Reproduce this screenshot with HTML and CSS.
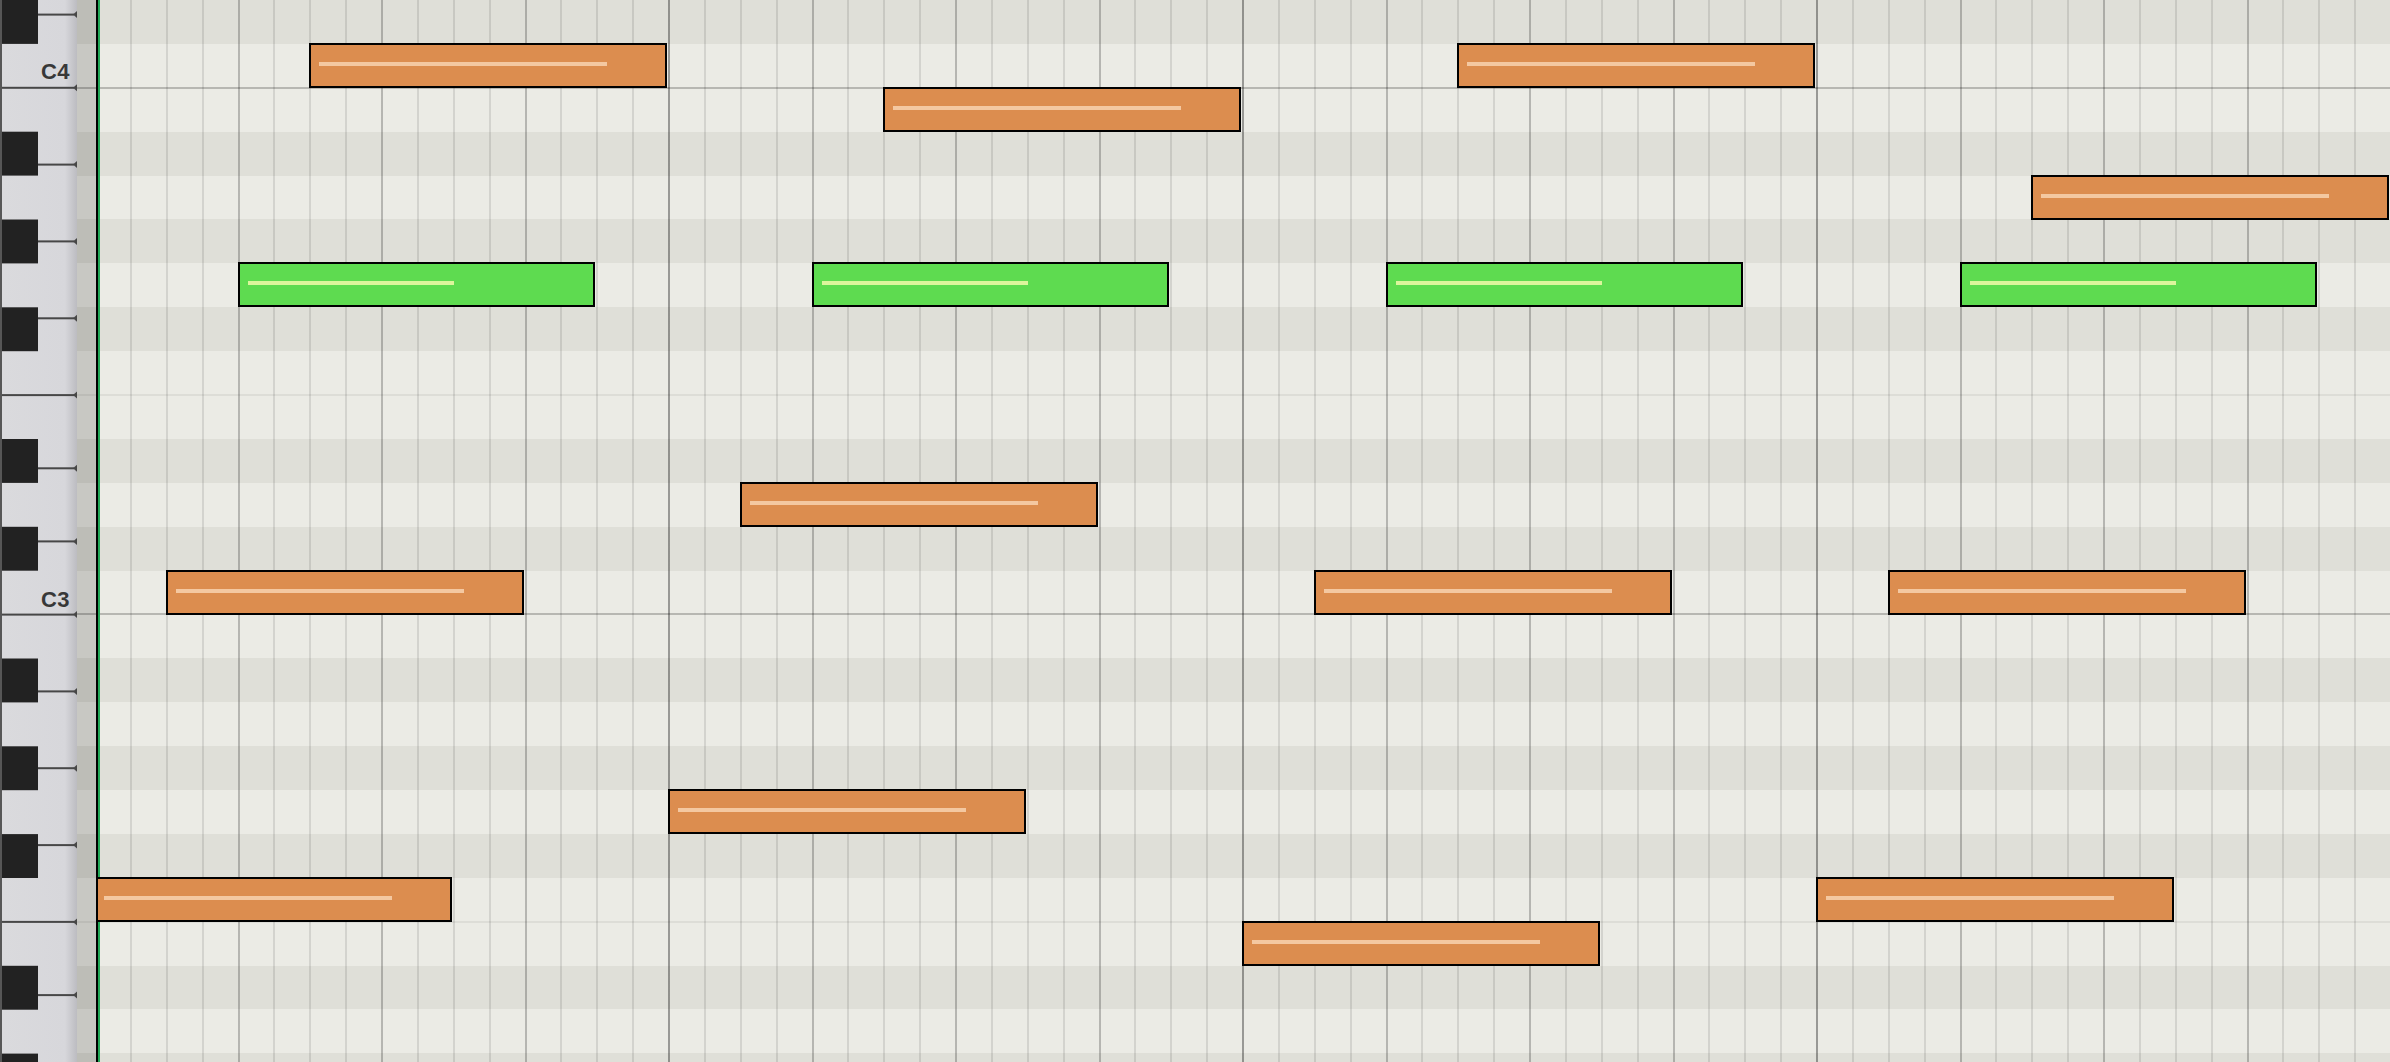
FILE: index.html
```html
<!DOCTYPE html>
<html lang="en">
<head>
    <meta charset="UTF-8">
    <meta name="viewport" content="width=device-width, initial-scale=1.0">
    <title>Piano Roll</title>

    <link rel="stylesheet" href="styles.css">

</head>
<body>

<div class="editor">

    <!-- keyboard: 12 rows per octave, white keys split C-E / F-B -->
    <div class="keys">
        <svg width="77" height="1062" viewBox="0 0 77 1062">
            <defs>
                <linearGradient id="whiteKey" x1="0" x2="1" y1="0" y2="0">
                    <stop offset="0" stop-color="#dadadd"/>
                    <stop offset="0.84" stop-color="#d7d7db"/>
                    <stop offset="1" stop-color="#bcbcc1"/>
                </linearGradient>
            </defs>
            <rect x="0" y="0" width="2" height="1062" fill="#575757"/>
            <rect x="2" y="0" width="75" height="1062" fill="url(#whiteKey)"/>

            <g fill="#474747">
                <rect x="2" y="13.6" width="72" height="2"/><polygon points="73,14.6 77,11.1 77,18.1"/>
                <rect x="2" y="86.8" width="72" height="2"/><polygon points="73,87.8 77,84.3 77,91.3"/>
                <rect x="2" y="163.6" width="72" height="2"/><polygon points="73,164.6 77,161.1 77,168.1"/>
                <rect x="2" y="240.4" width="72" height="2"/><polygon points="73,241.4 77,237.9 77,244.9"/>
                <rect x="2" y="317.3" width="72" height="2"/><polygon points="73,318.3 77,314.8 77,321.8"/>
                <rect x="2" y="394.1" width="72" height="2"/><polygon points="73,395.1 77,391.6 77,398.6"/>
                <rect x="2" y="467.3" width="72" height="2"/><polygon points="73,468.3 77,464.8 77,471.8"/>
                <rect x="2" y="540.4" width="72" height="2"/><polygon points="73,541.4 77,537.9 77,544.9"/>
                <rect x="2" y="613.6" width="72" height="2"/><polygon points="73,614.6 77,611.1 77,618.1"/>
                <rect x="2" y="690.4" width="72" height="2"/><polygon points="73,691.4 77,687.9 77,694.9"/>
                <rect x="2" y="767.2" width="72" height="2"/><polygon points="73,768.2 77,764.7 77,771.7"/>
                <rect x="2" y="844.1" width="72" height="2"/><polygon points="73,845.1 77,841.6 77,848.6"/>
                <rect x="2" y="920.9" width="72" height="2"/><polygon points="73,921.9 77,918.4 77,925.4"/>
                <rect x="2" y="994.1" width="72" height="2"/><polygon points="73,995.1 77,991.6 77,998.6"/>
            </g>

            <g fill="#222">
                <rect x="2" y="0" width="36" height="43.9"/>
                <rect x="2" y="131.7" width="36" height="43.9"/>
                <rect x="2" y="219.5" width="36" height="43.9"/>
                <rect x="2" y="307.3" width="36" height="43.9"/>
                <rect x="2" y="439" width="36" height="43.9"/>
                <rect x="2" y="526.8" width="36" height="43.9"/>
                <rect x="2" y="658.5" width="36" height="43.9"/>
                <rect x="2" y="746.3" width="36" height="43.9"/>
                <rect x="2" y="834.1" width="36" height="43.9"/>
                <rect x="2" y="965.8" width="36" height="43.9"/>
                <rect x="2" y="1053.6" width="36" height="43.9"/>
            </g>
        </svg>
        <span class="octave-label c4">C4</span>
        <span class="octave-label c3">C3</span>
    </div>

    <div class="roll">
        <div class="row dark"><div class="gutter"></div></div>
        <div class="row oct"><div class="gutter"></div></div>
        <div class="row"><div class="gutter"></div></div>
        <div class="row dark"><div class="gutter"></div></div>
        <div class="row"><div class="gutter"></div></div>
        <div class="row dark"><div class="gutter"></div></div>
        <div class="row"><div class="gutter"></div></div>
        <div class="row dark"><div class="gutter"></div></div>
        <div class="row ef"><div class="gutter"></div></div>
        <div class="row"><div class="gutter"></div></div>
        <div class="row dark"><div class="gutter"></div></div>
        <div class="row"><div class="gutter"></div></div>
        <div class="row dark"><div class="gutter"></div></div>
        <div class="row oct"><div class="gutter"></div></div>
        <div class="row"><div class="gutter"></div></div>
        <div class="row dark"><div class="gutter"></div></div>
        <div class="row"><div class="gutter"></div></div>
        <div class="row dark"><div class="gutter"></div></div>
        <div class="row"><div class="gutter"></div></div>
        <div class="row dark"><div class="gutter"></div></div>
        <div class="row ef"><div class="gutter"></div></div>
        <div class="row"><div class="gutter"></div></div>
        <div class="row dark"><div class="gutter"></div></div>
        <div class="row"><div class="gutter"></div></div>
        <div class="row dark"><div class="gutter"></div></div>

        <div class="canvas">
            <div class="gridlines"></div>
            <div class="playhead"></div>

            <!-- bar 1 -->
            <div class="note" style="--row:20;--col:0"></div>
            <div class="note" style="--row:13;--col:2"></div>
            <div class="note sel" style="--row:6;--col:4"></div>
            <div class="note" style="--row:1;--col:6"></div>
            <!-- bar 2 -->
            <div class="note" style="--row:18;--col:16"></div>
            <div class="note" style="--row:11;--col:18"></div>
            <div class="note sel" style="--row:6;--col:20"></div>
            <div class="note" style="--row:2;--col:22"></div>
            <!-- bar 3 -->
            <div class="note" style="--row:21;--col:32"></div>
            <div class="note" style="--row:13;--col:34"></div>
            <div class="note sel" style="--row:6;--col:36"></div>
            <div class="note" style="--row:1;--col:38"></div>
            <!-- bar 4 -->
            <div class="note" style="--row:20;--col:48"></div>
            <div class="note" style="--row:13;--col:50"></div>
            <div class="note sel" style="--row:6;--col:52"></div>
            <div class="note" style="--row:4;--col:54"></div>

            <div class="edge"></div>
        </div>
    </div>

</div>

</body>
</html>
```

FILE: styles.css
```css
body{
    margin: 0;
    overflow: hidden;
    background-color: #ebebe5;
    font-family: "Liberation Sans", Arial, sans-serif;
}
.editor{
    display: flex;
    height: 100vh;
}

/* keyboard */
.keys{
    flex: none;
    width: 77px;
    position: relative;
}
.keys svg{
    display: block;
}
.octave-label{
    position: absolute;
    right: 7px;
    font-size: 22px;
    font-weight: bold;
    line-height: 1;
    letter-spacing: 0.5px;
    color: #383838;
}
.octave-label.c4{
    top: 61px;
}
.octave-label.c3{
    top: 589px;
}

/* rows */
.roll{
    flex: 1;
    position: relative;
    display: flex;
    flex-direction: column;
    overflow: hidden;
}
.row{
    flex: none;
    height: 43.9px;
    position: relative;
    display: flex;
    background-color: #ebebe5;
}
.row.dark{
    background-color: #dfdfd8;
}
.gutter{
    flex: none;
    width: 19px;
    background-color: rgba(0,0,0,0.15);
}
.row.oct::after,
.row.ef::after{
    content: "";
    position: absolute;
    left: 0;
    right: 0;
    bottom: -1px;
    height: 2px;
    z-index: 1;
}
.row.oct::after{
    background-color: rgba(0,0,0,0.22);
}
.row.ef::after{
    background-color: rgba(0,0,0,0.06);
}

/* note canvas: 16 steps per bar, 35.875px per step */
.canvas{
    position: absolute;
    top: 0;
    bottom: 0;
    left: 19px;
    right: 0;
    overflow: hidden;
    z-index: 2;
}
.gridlines{
    position: absolute;
    top: 0;
    bottom: 0;
    left: 0;
    right: 0;
    background-image:
        repeating-linear-gradient(90deg, transparent 0 572px, rgba(0,0,0,0.16) 572px 574px),
        repeating-linear-gradient(90deg, transparent 0 141.5px, rgba(0,0,0,0.14) 141.5px 143.5px),
        repeating-linear-gradient(90deg, transparent 0 33.875px, rgba(0,0,0,0.1) 33.875px 35.875px);
}
.playhead{
    position: absolute;
    top: 0;
    bottom: 0;
    left: 2px;
    width: 2px;
    background-color: #22a957;
}
.edge{
    position: absolute;
    top: 0;
    bottom: 0;
    left: 0;
    width: 2px;
    background-color: #000;
}
.note{
    position: absolute;
    box-sizing: border-box;
    left: calc(var(--col) * 35.875px - 2px);
    top: calc(var(--row) * 43.9px - 1px);
    width: calc(10 * 35.875px - 1px);
    height: 45px;
    border: 2px solid #000;
    background-color: #dc8d4f;
}
.note::before{
    content: "";
    position: absolute;
    left: 8px;
    top: 17px;
    width: 288px;
    height: 4px;
    background-color: #f4c8a1;
}
.note.sel{
    background-color: #5edb50;
}
.note.sel::before{
    width: 206px;
    background-color: #dcf59c;
}
```
